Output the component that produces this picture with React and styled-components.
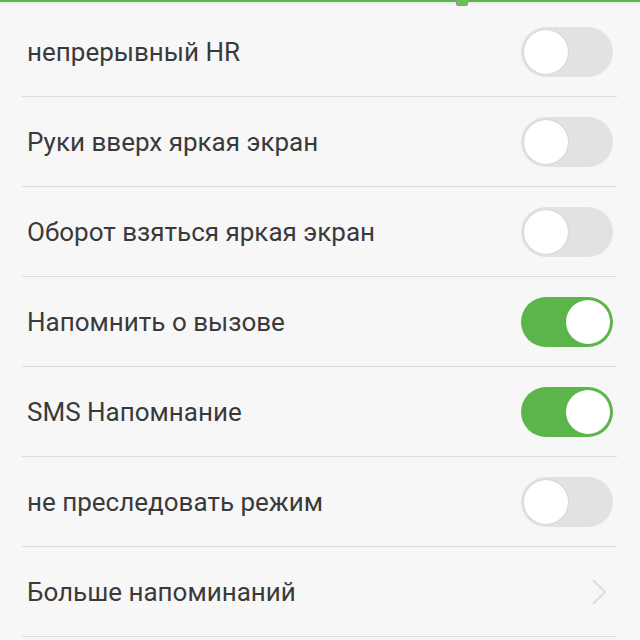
import React from 'react';
import styled, { createGlobalStyle } from 'styled-components';

const GlobalStyle = createGlobalStyle`
  html, body {
    margin: 0;
    padding: 0;
    background: #f7f7f7;
    font-family: Roboto, "Noto Sans", sans-serif;
    overflow: hidden;
  }
`;

const Screen = styled.div`
  position: relative;
  width: 640px;
  height: 640px;
  background: #f7f7f7;
  padding-top: 7px;
  box-sizing: border-box;
`;

const TopBar = styled.div`
  position: absolute;
  top: 0;
  left: 0;
  right: 0;
  height: 2px;
  background: #5cb54a;
  box-shadow: 0 1px 3px rgba(0, 0, 0, 0.12);
`;

const Tab = styled.div`
  position: absolute;
  top: -4px;
  left: 456px;
  width: 10px;
  height: 8px;
  border: 1px solid #8a9a86;
  border-radius: 2px;
  background: #6cbf5a;
`;

const List = styled.div`
  display: flex;
  flex-direction: column;
  margin: 0 23px 0 22px;
`;

const Row = styled.div`
  display: flex;
  align-items: center;
  justify-content: space-between;
  height: 89px;
  border-bottom: 1px solid #dcdcdc;
  padding: 0 4px 0 5px;
`;

const Label = styled.span`
  font-size: 26px;
  font-weight: 400;
  color: #3a3a3a;
`;

const Track = styled.div`
  position: relative;
  width: 92px;
  height: 50px;
  border-radius: 25px;
  background: ${p => (p.on ? '#5cb54a' : '#e2e2e2')};
  box-sizing: border-box;
`;

const Knob = styled.div`
  position: absolute;
  top: 3px;
  left: ${p => (p.on ? '45px' : '3px')};
  width: 44px;
  height: 44px;
  border-radius: 50%;
  background: #ffffff;
  box-shadow: ${p => (p.on ? 'none' : '0 0 0 1px #d6d6d6')};
`;

const ChevronIcon = styled.svg`
  margin-right: 5px;
`;

const Switch = ({ on }) => (
  <Track on={on}>
    <Knob on={on} />
  </Track>
);

const Chevron = () => (
  <ChevronIcon width="18" height="30" viewBox="0 0 18 30">
    <path d="M3 3 L15 15 L3 27" fill="none" stroke="#dedede" strokeWidth="2" />
  </ChevronIcon>
);

const items = [
  { label: 'непрерывный HR', on: false },
  { label: 'Руки вверх яркая экран', on: false },
  { label: 'Оборот взяться яркая экран', on: false },
  { label: 'Напомнить о вызове', on: true },
  { label: 'SMS Напомнание', on: true },
  { label: 'не преследовать режим', on: false },
];

export default function App() {
  return (
    <Screen>
      <GlobalStyle />
      <TopBar />
      <Tab />
      <List>
        {items.map(it => (
          <Row key={it.label}>
            <Label>{it.label}</Label>
            <Switch on={it.on} />
          </Row>
        ))}
        <Row>
          <Label>Больше напоминаний</Label>
          <Chevron />
        </Row>
      </List>
    </Screen>
  );
}
